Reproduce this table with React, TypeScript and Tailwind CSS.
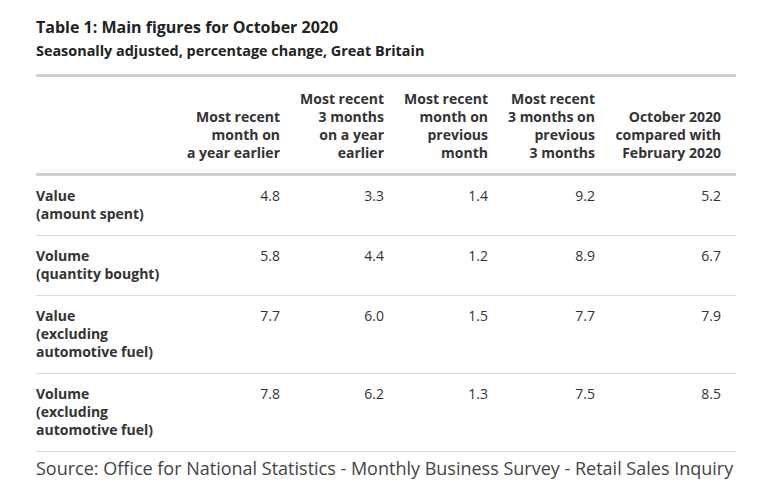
const headers = [
  ['Most recent', 'month on', 'a year earlier'],
  ['Most recent', '3 months', 'on a year', 'earlier'],
  ['Most recent', 'month on', 'previous', 'month'],
  ['Most recent', '3 months on', 'previous', '3 months'],
  ['October 2020', 'compared with', 'February 2020'],
];

const rows = [
  { label: ['Value', '(amount spent)'], values: ['4.8', '3.3', '1.4', '9.2', '5.2'] },
  { label: ['Volume', '(quantity bought)'], values: ['5.8', '4.4', '1.2', '8.9', '6.7'] },
  { label: ['Value', '(excluding', 'automotive fuel)'], values: ['7.7', '6.0', '1.5', '7.7', '7.9'] },
  { label: ['Volume', '(excluding', 'automotive fuel)'], values: ['7.8', '6.2', '1.3', '7.5', '8.5'] },
];

const cols = 'grid grid-cols-[149px_110px_104px_104px_107px_126px]';

export default function App() {
  return (
    <div className="min-h-screen bg-white font-['Open_Sans',sans-serif] text-[#333]">
      <div className="pl-[36px] pt-[15px] w-[736px] box-content">
        <h1 className="text-[16px] leading-[24px] font-bold text-[#222]">Table 1: Main figures for October 2020</h1>
        <h2 className="text-[14.4px] leading-[20px] font-bold text-[#222] mt-[2px]">
          Seasonally adjusted, percentage change, Great Britain
        </h2>

        {/* Table */}
        <div className="mt-[13px] w-[700px] border-t-[3px] border-[#cfcfcf]">
          {/* Header */}
          <div className={`${cols} border-b-[3px] border-[#cfcfcf] text-[14px] leading-[18px] font-bold`}>
            <div />
            {headers.map((h, i) => (
              <div key={i} className="flex flex-col justify-end text-right pr-[15px] pt-[13px] pb-[11px]">
                {h.map((line) => (
                  <span key={line}>{line}</span>
                ))}
              </div>
            ))}
          </div>

          {/* Body */}
          {rows.map((row, r) => (
            <div key={r} className={`${cols} border-b border-[#d9d9d9] text-[14px] leading-[18px]`}>
              <div className="flex flex-col font-bold pt-[11px] pb-[12px]">
                {row.label.map((line) => (
                  <span key={line}>{line}</span>
                ))}
              </div>
              {row.values.map((v, i) => (
                <div key={i} className="text-right pr-[15px] pt-[11px] pb-[12px]">
                  {v}
                </div>
              ))}
            </div>
          ))}
        </div>

        <p className="mt-[4px] text-[18px] leading-[24px] text-[#444]">
          Source: Office for National Statistics - Monthly Business Survey - Retail Sales Inquiry
        </p>
      </div>
    </div>
  );
}
